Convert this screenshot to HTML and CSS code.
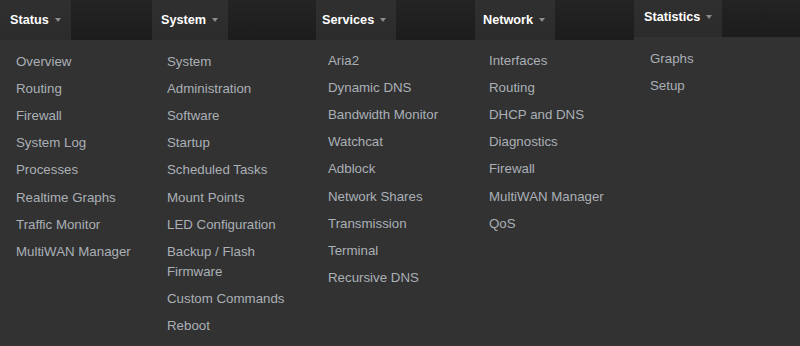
FILE: index.html
```html
<!DOCTYPE html>
<html>
<head>
<meta charset="utf-8">
<link rel="stylesheet" href="styles.css">
</head>
<body>
<div class="menubar">
  <div class="col">
    <div class="head"><span class="tab">Status<i class="caret"></i></span></div>
    <ul class="menu">
      <li>Overview</li>
      <li>Routing</li>
      <li>Firewall</li>
      <li>System Log</li>
      <li>Processes</li>
      <li>Realtime Graphs</li>
      <li>Traffic Monitor</li>
      <li>MultiWAN Manager</li>
    </ul>
  </div>
  <div class="col">
    <div class="head"><span class="tab tab-system">System<i class="caret"></i></span></div>
    <ul class="menu">
      <li>System</li>
      <li>Administration</li>
      <li>Software</li>
      <li>Startup</li>
      <li>Scheduled Tasks</li>
      <li>Mount Points</li>
      <li>LED Configuration</li>
      <li>Backup / Flash Firmware</li>
      <li>Custom Commands</li>
      <li>Reboot</li>
    </ul>
  </div>
  <div class="col">
    <div class="head"><span class="tab tab-services">Services<i class="caret"></i></span></div>
    <ul class="menu menu-up">
      <li>Aria2</li>
      <li>Dynamic DNS</li>
      <li>Bandwidth Monitor</li>
      <li>Watchcat</li>
      <li>Adblock</li>
      <li>Network Shares</li>
      <li>Transmission</li>
      <li>Terminal</li>
      <li>Recursive DNS</li>
    </ul>
  </div>
  <div class="col">
    <div class="head"><span class="tab tab-network">Network<i class="caret"></i></span></div>
    <ul class="menu menu-up">
      <li>Interfaces</li>
      <li>Routing</li>
      <li>DHCP and DNS</li>
      <li>Diagnostics</li>
      <li>Firewall</li>
      <li>MultiWAN Manager</li>
      <li>QoS</li>
    </ul>
  </div>
  <div class="col col-raised">
    <div class="head"><span class="tab">Statistics<i class="caret"></i></span></div>
    <ul class="menu">
      <li>Graphs</li>
      <li>Setup</li>
    </ul>
  </div>
</div>
</body>
</html>
```

FILE: styles.css
```css
html, body {
  margin: 0;
  padding: 0;
  background: #323232;
  height: 100%;
  overflow: hidden;
}

body {
  font-family: "Liberation Sans", Arial, sans-serif;
}

.menubar {
  display: grid;
  grid-template-columns: 151px 161px 161px 161px 1fr;
}

.col {
  display: flex;
  flex-direction: column;
}

.col-raised {
  margin-top: -3px;
}

.head {
  height: 40px;
  background: linear-gradient(#242424, #1c1c1c);
  display: flex;
  align-items: stretch;
}

.tab {
  display: flex;
  align-items: center;
  padding: 0 10px 1px 10px;
  background: linear-gradient(#303030, #2b2b2b);
  color: #ffffff;
  font-weight: bold;
  font-size: 12.7px;
}

.tab-system {
  margin-left: 1px;
  padding-left: 9px;
}

.tab-services {
  margin-left: 4px;
  padding-left: 6px;
}

.tab-network {
  margin-left: 2px;
  padding-left: 8px;
}

.caret {
  display: inline-block;
  width: 0;
  height: 0;
  margin-left: 6px;
  margin-top: 1px;
  border-left: 3.5px solid transparent;
  border-right: 3.5px solid transparent;
  border-top: 4px solid #8c8c8c;
}

.menu {
  list-style: none;
  margin: 0;
  padding: 8px 16px 0 16px;
}

.menu-up {
  padding-top: 7px;
}

.menu li {
  font-size: 13.3px;
  line-height: 20px;
  padding: 3.6px 0;
  color: #aab0b6;
}
```
